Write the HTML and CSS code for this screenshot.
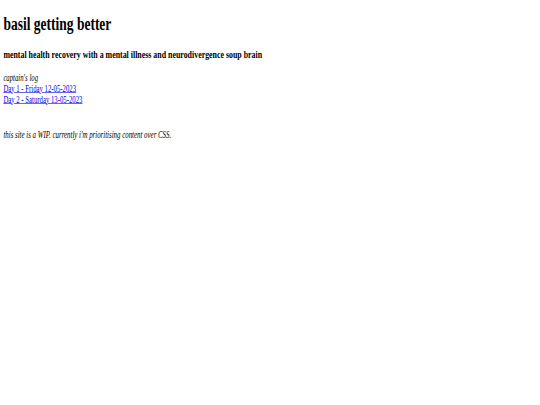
FILE: index.html
```html
<!DOCTYPE html>
<html>
<head>
<meta charset="utf-8">
<title>basil getting better</title>
<link rel="stylesheet" href="styles.css">
</head>
<body>
<div class="frame">
<div class="page">
<h1 class="title">basil getting better</h1>
<h3 class="subtitle">mental health recovery with a mental illness and neurodivergence soup brain</h3>
<p class="log"><em>captain's log</em><br>
<a href="#">Day 1 - Friday 12-05-2023</a><br>
<a href="#">Day 2 - Saturday 13-05-2023</a></p>
<p class="note"><em>this site is a WIP. currently i'm prioritising content over CSS.</em></p>
</div>
</div>
</body>
</html>
```
FILE: styles.css
```css
html, body {
  margin: 0;
  padding: 0;
  background: #ffffff;
}
.frame {
  width: 540px;
  height: 405px;
  overflow: hidden;
}
.page {
  width: 1000px;
  padding: 8px;
  font-family: "Liberation Serif", "Times New Roman", serif;
  font-size: 16px;
  color: #000;
  transform: scale(0.421875, 0.6);
  transform-origin: 0 0;
}
.title {
  font-size: 32px;
  margin: 13.44px 0 21.44px;
}
.subtitle {
  font-size: 18.72px;
  margin: 18.72px 0;
}
.log {
  margin: 16px 0;
}
.log a {
  color: #0000ee;
}
.note {
  margin: 40px 0 16px;
  font-size: 16.3px;
}
```
